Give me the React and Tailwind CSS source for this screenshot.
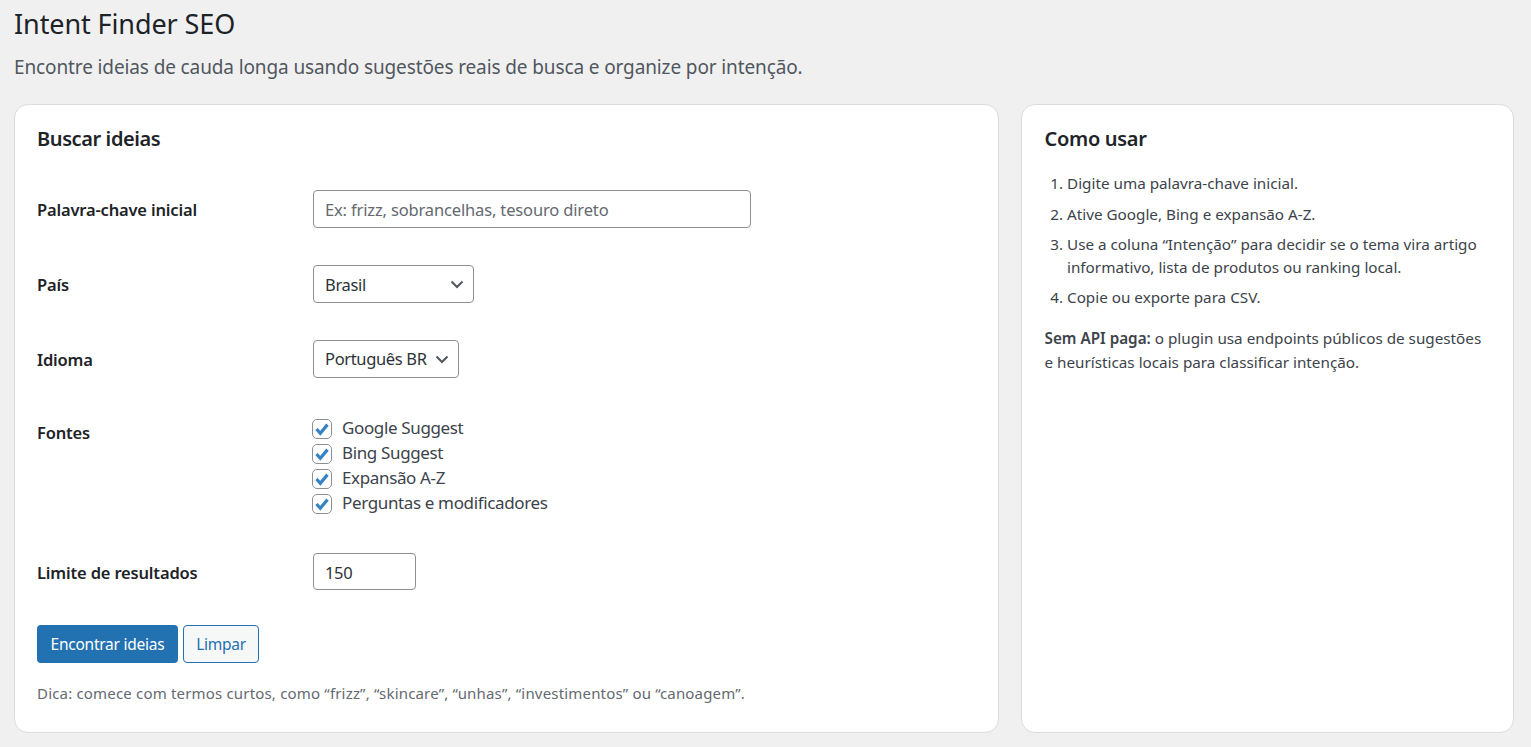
const font = { fontFamily: '"Noto Sans", sans-serif' };

function Chevron() {
  return (
    <svg className="pointer-events-none absolute right-[9px] top-1/2 -translate-y-1/2" width="16" height="16" viewBox="0 0 16 16" fill="none">
      <path d="M2.5 5.5 L8 11 L13.5 5.5" stroke="#50575e" strokeWidth="2" />
    </svg>
  );
}

function Check({ label }) {
  return (
    <label className="flex h-[25px] items-center">
      <span className="flex h-[20px] w-[20px] items-center justify-center rounded-[5px] border border-[#8c8f94] bg-white">
        <svg width="16" height="16" viewBox="0 0 16 16" fill="none">
          <path d="M2.5 8 L6.3 12.2 L13.5 3.6" stroke="#3582c4" strokeWidth="3.2" />
        </svg>
      </span>
      <span className="ml-[10px] -translate-y-px text-[17px] tracking-[-0.36px] text-[#3c434a]">{label}</span>
    </label>
  );
}

function Row({ label, className, labelClass, children }) {
  return (
    <div className={`flex ${className}`}>
      <div className={`w-[276px] shrink-0 text-[16.5px] font-semibold tracking-[-0.17px] text-[#1d2327] ${labelClass}`}>{label}</div>
      <div>{children}</div>
    </div>
  );
}

export default function App() {
  return (
    <div style={font} className="h-[747px] overflow-hidden bg-[#f0f0f1] pl-[14px] pr-[17px]">
      <h1 className="pt-[6px] text-[27px] leading-[36px] tracking-[-0.1px] text-[#1d2327]">Intent Finder SEO</h1>
      <p className="mt-[12px] text-[19px] leading-[26px] tracking-[-0.12px] text-[#50575e]">
        Encontre ideias de cauda longa usando sugestões reais de busca e organize por intenção.
      </p>

      <div className="mt-[24px] flex gap-[22px]">
        {/* Buscar ideias */}
        <div className="h-[629px] w-[985px] rounded-[14px] border border-[#dcdcde] bg-white px-[22px] pt-[20px]">
          <h2 className="text-[20px] font-semibold leading-[28px] tracking-[-0.4px] text-[#1d2327]">Buscar ideias</h2>

          <Row label="Palavra-chave inicial" labelClass="pt-[2px]" className="mt-[37px] h-[38px] items-center">
            <input
              placeholder="Ex: frizz, sobrancelhas, tesouro direto"
              className="h-[38px] w-[438px] rounded-[4px] border border-[#8c8f94] bg-white px-[11px] text-[16.5px] tracking-[-0.15px] text-[#2c3338] placeholder:text-[#646970]"
            />
          </Row>

          <Row label="País" labelClass="pt-[2px]" className="mt-[37px] h-[38px] items-center">
            <div className="relative w-[161px]">
              <select className="h-[38px] w-full appearance-none rounded-[4px] border border-[#8c8f94] bg-white px-[11px] pt-[2px] text-[16.5px] tracking-[-0.35px] text-[#2c3338]">
                <option>Brasil</option>
              </select>
              <Chevron />
            </div>
          </Row>

          <Row label="Idioma" labelClass="pt-[2px]" className="mt-[37px] h-[38px] items-center">
            <div className="relative w-[146px]">
              <select className="h-[38px] w-full appearance-none rounded-[4px] border border-[#8c8f94] bg-white px-[11px] text-[16.5px] tracking-[-0.35px] text-[#2c3338]">
                <option>Português BR</option>
              </select>
              <Chevron />
            </div>
          </Row>

          <Row label="Fontes" labelClass="pt-[2px]" className="mt-[37px] leading-[32px]">
            <div className="-ml-px pt-[1px] leading-normal">
              <Check label="Google Suggest" />
              <Check label="Bing Suggest" />
              <Check label="Expansão A-Z" />
              <Check label="Perguntas e modificadores" />
            </div>
          </Row>

          <Row label="Limite de resultados" labelClass="pt-[4px]" className="mt-[36px] h-[38px] items-center">
            <input
              defaultValue="150"
              className="h-[37px] w-[103px] rounded-[4px] border border-[#8c8f94] bg-white px-[11px] pt-[2px] text-[16.5px] tracking-[-0.35px] text-[#2c3338]"
            />
          </Row>

          <div className="mt-[35px] flex gap-[5px]">
            <button className="h-[38px] w-[141px] rounded-[4px] bg-[#2271b1] pt-[2px] text-[15.5px] tracking-[-0.25px] text-white">Encontrar ideias</button>
            <button className="h-[38px] w-[76px] rounded-[4px] border border-[#2271b1] bg-[#f6f7f7] pt-[2px] text-[15.5px] tracking-[-0.25px] text-[#2271b1]">Limpar</button>
          </div>

          <p className="mt-[20px] text-[15px] leading-[20px] tracking-[0.18px] text-[#646970]">
            Dica: comece com termos curtos, como “frizz”, “skincare”, “unhas”, “investimentos” ou “canoagem”.
          </p>
        </div>

        {/* Como usar */}
        <div className="h-[629px] w-[493px] rounded-[14px] border border-[#dcdcde] bg-white pl-[22.5px] pr-[22px] pt-[20px]">
          <h2 className="text-[20px] font-semibold leading-[28px] tracking-[-0.3px] text-[#1d2327]">Como usar</h2>
          <ol className="mt-[19px] list-decimal pl-[22.5px] text-[15.25px] leading-[23px] text-[#3c434a]">
            <li className="mb-[8px]">Digite uma palavra-chave inicial.</li>
            <li className="mb-[7px]">Ative Google, Bing e expansão A-Z.</li>
            <li className="mb-[7px]">Use a coluna “Intenção” para decidir se o tema vira artigo informativo, lista de produtos ou ranking local.</li>
            <li>Copie ou exporte para CSV.</li>
          </ol>
          <p className="mt-[17px] text-[15.25px] leading-[24px] text-[#3c434a]">
            <strong className="font-semibold">Sem API paga:</strong> o plugin usa endpoints públicos de sugestões e heurísticas locais para classificar intenção.
          </p>
        </div>
      </div>
    </div>
  );
}
